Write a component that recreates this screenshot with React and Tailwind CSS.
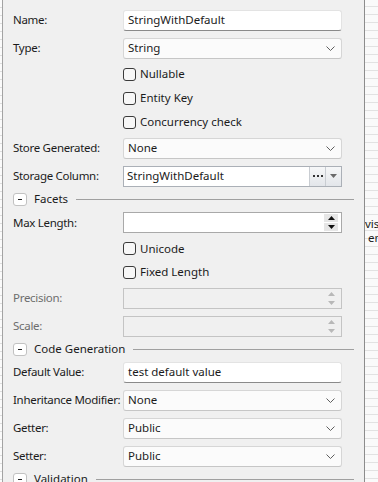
const font = { fontFamily: '"Noto Sans", "Open Sans", sans-serif' };

function Label({ children, disabled }) {
  return (
    <div
      className={`w-[110px] shrink-0 whitespace-nowrap text-[11.5px] leading-none tracking-[-0.3px] ${
        disabled ? "text-[#6d6d6d]" : "text-[#1b1b1b]"
      }`}
    >
      {children}
    </div>
  );
}

function TextBox({ value }) {
  return (
    <div className="flex h-[21px] w-[219px] items-center rounded-[3px] border border-[#e3e3e3] border-b-[#8a8a8a] bg-white px-[4px] text-[11.5px] text-[#1b1b1b]">
      {value}
    </div>
  );
}

function Combo({ value }) {
  return (
    <div className="flex h-[21px] w-[219px] items-center justify-between rounded-[3px] border border-[#d6d6d6] border-b-[#c6c6c6] bg-[#fbfbfb] pl-[4px] pr-[6px] text-[11.5px] text-[#1b1b1b]">
      <span>{value}</span>
      <svg width="9" height="5" viewBox="0 0 9 5">
        <path d="M0.5 0.5 L4.5 4.5 L8.5 0.5" fill="none" stroke="#5f5f5f" strokeWidth="1" />
      </svg>
    </div>
  );
}

function Spinner({ disabled }) {
  const tri = disabled ? "#b8b8b8" : "#111111";
  const btn = disabled ? "bg-[#f0f0f0]" : "bg-[#e6e6e6]";
  return (
    <div
      className={`flex h-[21px] w-[219px] items-center justify-end border pr-[3px] ${
        disabled ? "border-[#c4c4c4] bg-[#f0f0f0]" : "border-[#a9a9a9] bg-white"
      }`}
    >
      <div className="flex h-[17px] w-[14px] flex-col gap-[1px]">
        <div className={`flex h-[8px] items-center justify-center ${btn}`}>
          <svg width="7" height="4" viewBox="0 0 7 4">
            <path d="M3.5 0 L7 4 L0 4 Z" fill={tri} />
          </svg>
        </div>
        <div className={`flex h-[8px] items-center justify-center ${btn}`}>
          <svg width="7" height="4" viewBox="0 0 7 4">
            <path d="M0 0 L7 0 L3.5 4 Z" fill={tri} />
          </svg>
        </div>
      </div>
    </div>
  );
}

function Row({ label, disabled, h = "h-[28px]", children }) {
  return (
    <div className={`flex ${h} items-center`}>
      <Label disabled={disabled}>{label}</Label>
      {children}
    </div>
  );
}

function Check({ label, h = "h-[24px]" }) {
  return (
    <div className={`flex ${h} items-center pl-[110px]`}>
      <div className="h-[13px] w-[13px] rounded-[3px] border border-[#3a3a3a] bg-[#f7f7f7]" />
      <span className="ml-[4px] text-[11.5px] leading-none text-[#1b1b1b]">{label}</span>
    </div>
  );
}

function Section({ title }) {
  return (
    <div className="flex h-[18px] items-center">
      <div className="flex h-[13px] w-[14px] items-center justify-center rounded-[3px] border border-[#c2c2c2] bg-white">
        <div className="h-[1px] w-[4px] bg-[#222]" />
      </div>
      <span className="ml-[7px] mr-[8px] whitespace-nowrap text-[11.5px] leading-none text-[#1b1b1b]">{title}</span>
      <div className="mr-[10px] h-[1px] flex-1 bg-[#a0a0a0]" />
    </div>
  );
}

export default function App() {
  return (
    <div className="flex h-[482px] w-[378px] overflow-hidden bg-white" style={font}>
      <div className="w-[2px] shrink-0 bg-[repeating-linear-gradient(to_bottom,#fbfbfb_0,#fbfbfb_7px,#dedede_7px,#dedede_8px)]" />
      <div className="w-[1px] shrink-0 bg-[#a3a3a3]" />
      <div className="w-[361px] shrink-0 bg-[#f0f0f0] pl-[10px] pt-[6px]">
        <Row label="Name:">
          <TextBox value="StringWithDefault" />
        </Row>
        <Row label="Type:">
          <Combo value="String" />
        </Row>
        <Check label="Nullable" />
        <Check label="Entity Key" />
        <Check label="Concurrency check" />
        <Row label="Store Generated:">
          <Combo value="None" />
        </Row>
        <Row label="Storage Column:">
          <div className="flex h-[21px] w-[219px] border border-[#abb0b7] bg-white">
            <div className="flex flex-1 items-center pl-[3px] text-[11.5px] text-[#1b1b1b]">StringWithDefault</div>
            <div className="flex w-[16px] items-center justify-center gap-[2px] border-l border-[#c9cdd2] bg-gradient-to-b from-[#f6f7f8] to-[#e3e6ea]">
              <div className="h-[2px] w-[2px] bg-[#333]" />
              <div className="h-[2px] w-[2px] bg-[#333]" />
              <div className="h-[2px] w-[2px] bg-[#333]" />
            </div>
            <div className="flex w-[16px] items-center justify-center border-l border-[#c9cdd2] bg-gradient-to-b from-[#f6f7f8] to-[#e3e6ea]">
              <svg width="7" height="4" viewBox="0 0 7 4">
                <path d="M0 0 L7 0 L3.5 4 Z" fill="#6a6a6a" />
              </svg>
            </div>
          </div>
        </Row>
        <Section title="Facets" />
        <Row label="Max Length:" h="h-[29px]">
          <Spinner />
        </Row>
        <Check label="Unicode" h="h-[23px]" />
        <Check label="Fixed Length" />
        <Row label="Precision:" disabled>
          <Spinner disabled />
        </Row>
        <Row label="Scale:" disabled>
          <Spinner disabled />
        </Row>
        <Section title="Code Generation" />
        <Row label="Default Value:">
          <TextBox value="test default value" />
        </Row>
        <Row label="Inheritance Modifier:">
          <Combo value="None" />
        </Row>
        <Row label="Getter:">
          <Combo value="Public" />
        </Row>
        <Row label="Setter:">
          <Combo value="Public" />
        </Row>
        <Section title="Validation" />
      </div>
      <div className="w-[1px] shrink-0 bg-[#8c8c8c]" />
      <div className="relative flex-1 overflow-hidden bg-[repeating-linear-gradient(to_bottom,#fafafa_0,#fafafa_6px,#e2e2e2_6px,#e2e2e2_7px,#fafafa_7px,#fafafa_8px)]">
        <div className="absolute left-0 top-[217px] whitespace-nowrap text-[11.5px] leading-[14px] text-[#1b1b1b]">
          <div>vis</div>
          <div className="pl-[3px]">em</div>
        </div>
      </div>
    </div>
  );
}
